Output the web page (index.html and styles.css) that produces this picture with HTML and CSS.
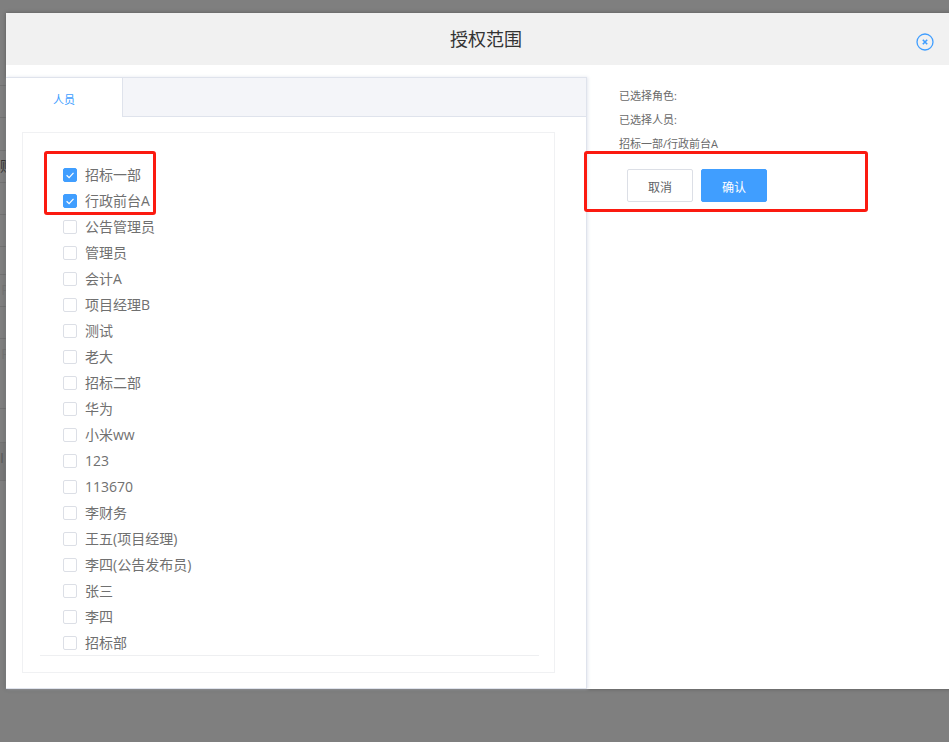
FILE: index.html
```html
<!DOCTYPE html>
<html lang="zh-CN">
<head>
<meta charset="utf-8">
<title>授权范围</title>
<link rel="stylesheet" href="styles.css">
</head>
<body>
<div class="backdrop">
  <div class="ghost-row h32"></div>
  <div class="ghost-row h33"></div>
  <div class="ghost-row h32"><span class="ghost-text">购</span></div>
  <div class="ghost-row h32"></div>
  <div class="ghost-row h32"></div>
  <div class="ghost-row h28"></div>
  <div class="ghost-row h32"><span class="ghost-text faint">P</span></div>
  <div class="ghost-row h32"></div>
  <div class="ghost-row h70"><span class="ghost-text faint">P</span></div>
  <div class="ghost-row h34"></div>
  <div class="ghost-row h39 dark"><span class="ghost-text bar">I</span></div>
</div>

<section class="dialog">
  <header class="dialog-head">
    <h1 class="dialog-title">授权范围</h1>
    <button class="close" aria-label="关闭">
      <svg width="18" height="18" viewBox="0 0 18 18" fill="none" stroke="#409eff">
        <circle cx="9" cy="9" r="8" stroke-width="1.3"/>
        <path d="M6.8 6.8l4.4 4.4M11.2 6.8l-4.4 4.4" stroke-width="1.6"/>
      </svg>
    </button>
  </header>
  <div class="dialog-body">
    <div class="left">
      <div class="tabs">
        <div class="tab">人员</div>
      </div>
      <div class="card">
        <ul class="list">
          <li class="item"><span class="box on"><svg width="14" height="14" viewBox="0 0 14 14" fill="none" stroke="#fff" stroke-width="1.2"><path d="M3.6 7.2l2.5 2.4 4.4-4.8"/></svg></span>招标一部</li>
          <li class="item"><span class="box on"><svg width="14" height="14" viewBox="0 0 14 14" fill="none" stroke="#fff" stroke-width="1.2"><path d="M3.6 7.2l2.5 2.4 4.4-4.8"/></svg></span>行政前台A</li>
          <li class="item"><span class="box"></span>公告管理员</li>
          <li class="item"><span class="box"></span>管理员</li>
          <li class="item"><span class="box"></span>会计A</li>
          <li class="item"><span class="box"></span>项目经理B</li>
          <li class="item"><span class="box"></span>测试</li>
          <li class="item"><span class="box"></span>老大</li>
          <li class="item"><span class="box"></span>招标二部</li>
          <li class="item"><span class="box"></span>华为</li>
          <li class="item"><span class="box"></span>小米ww</li>
          <li class="item"><span class="box"></span>123</li>
          <li class="item"><span class="box"></span>113670</li>
          <li class="item"><span class="box"></span>李财务</li>
          <li class="item"><span class="box"></span>王五(项目经理)</li>
          <li class="item"><span class="box"></span>李四(公告发布员)</li>
          <li class="item"><span class="box"></span>张三</li>
          <li class="item"><span class="box"></span>李四</li>
          <li class="item"><span class="box"></span>招标部</li>
        </ul>
      </div>
    </div>
    <div class="right">
      <p class="line">已选择角色:</p>
      <p class="line">已选择人员:</p>
      <p class="line">招标一部/行政前台A</p>
      <div class="actions">
        <button class="btn">取消</button>
        <button class="btn primary">确认</button>
      </div>
    </div>
  </div>
</section>

<div class="mark mark-list"></div>
<div class="mark mark-actions"></div>
</body>
</html>
```
FILE: styles.css
```css
* { box-sizing: border-box; }
html, body { margin: 0; height: 100%; }
body {
  position: relative;
  width: 949px;
  height: 742px;
  overflow: hidden;
  background: #7f7f7f;
  font-family: "Open Sans", "Noto Sans CJK SC", sans-serif;
  color: #606266;
}
.backdrop {
  width: 6px;
  padding-top: 85px;
  overflow: hidden;
}
.ghost-row {
  border-top: 1px solid #727272;
  overflow: hidden;
  white-space: nowrap;
}
.ghost-row.dark { background: #787878; border-bottom: 1px solid #727272; }
.h28 { height: 28px; }
.h32 { height: 32px; }
.h33 { height: 33px; }
.h34 { height: 34px; }
.h39 { height: 39px; }
.h70 { height: 70px; }
.ghost-text {
  display: block;
  font-size: 14px;
  line-height: 30px;
  color: #333;
}
.ghost-text.faint { padding-left: 1px; color: #757575; }
.ghost-text.bar { color: #5a5a5a; }
.dialog {
  position: absolute;
  left: 6px;
  top: 13px;
  width: 960px;
  height: 676px;
  background: #fff;
  box-shadow: 0 0 4px rgba(0, 0, 0, .3);
}
.dialog-head {
  position: relative;
  height: 52px;
  padding: 0 478px 2px;
  background: #f1f1f1;
  display: flex;
  align-items: center;
  justify-content: center;
}
.dialog-title {
  margin: 0;
  font-size: 18px;
  font-weight: 400;
  color: #333;
  white-space: nowrap;
}
.close {
  position: absolute;
  left: 909.5px;
  top: 19.5px;
  width: 18px;
  height: 18px;
  padding: 0;
  border: 0;
  background: none;
  display: block;
}
.close svg { display: block; }
.dialog-body {
  display: flex;
  height: 624px;
  padding-top: 12px;
}
.left {
  width: 581px;
  height: 612px;
  border-top: 1px solid #dfe3ec;
  border-right: 1px solid #dfe3ec;
  border-bottom: 1px solid #dfe3ec;
  box-shadow: 1px 0 3px rgba(210, 214, 228, .6);
}
.tabs {
  height: 39px;
  background: #f4f5f9;
  border-bottom: 1px solid #dfe3ec;
}
.tab {
  width: 117px;
  height: 39px;
  background: #fff;
  border-right: 1px solid #dfe3ec;
  color: #409eff;
  font-size: 11px;
  line-height: 44px;
  text-align: center;
}
.card {
  width: 533px;
  height: 541px;
  margin: 15px 0 0 16px;
  padding: 29px 15px 0 17px;
  border: 1px solid #f0f1f3;
}
.list {
  list-style: none;
  margin: 0;
  padding: 0;
  height: 494px;
  border-bottom: 1px solid #eeeff1;
}
.item {
  display: flex;
  align-items: flex-start;
  height: 26px;
  padding-left: 23px;
  font-size: 14px;
  line-height: 25px;
  color: #707070;
  white-space: nowrap;
}
.box {
  flex: none;
  width: 14px;
  height: 14px;
  margin: 6px 8px 0 0;
  background: #fff;
  border: 1px solid #dcdfe6;
  border-radius: 2px;
  display: block;
  position: relative;
}
.box.on {
  background: #409eff;
  border-color: #409eff;
}
.box svg { position: absolute; left: -1px; top: -1px; display: block; }
.right {
  flex: 1;
  padding: 10px 0 0 32px;
}
.line {
  margin: 0 0 6px;
  font-size: 11px;
  line-height: 18px;
  color: #6a6a6a;
  white-space: nowrap;
}
.actions {
  display: flex;
  gap: 8px;
  padding: 10px 0 0 8px;
}
.btn {
  width: 66px;
  height: 33px;
  padding: 2px 0 0;
  background: #fff;
  border: 1px solid #dcdfe6;
  border-radius: 2px;
  color: #606266;
  font-family: inherit;
  font-size: 12px;
}
.btn.primary {
  background: #409eff;
  border-color: #409eff;
  color: #fff;
}
.mark {
  position: absolute;
  border: 3px solid #fb1a10;
  border-radius: 3px;
}
.mark-list { left: 44px; top: 151px; width: 112px; height: 64px; }
.mark-actions { left: 584px; top: 151px; width: 284px; height: 61px; }
```
